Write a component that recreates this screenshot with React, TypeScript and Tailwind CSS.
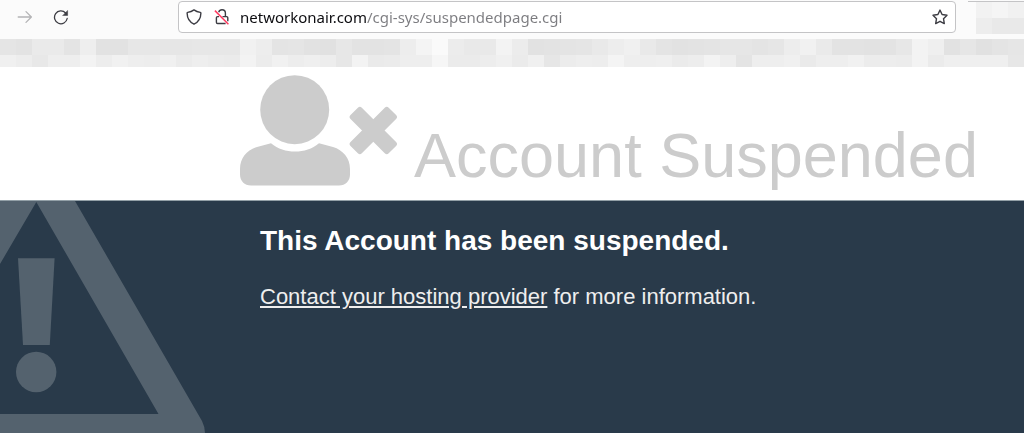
import React, { useState } from "react";

// grey levels of the blurred bookmarks row
const BOOKMARKS_TOP = [
  229, 227, 234, 234, 228, 238, 226, 226, 231, 231, 230, 230, 231, 231, 231, 241,
  237, 228, 229, 226, 225, 231, 227, 227, 228, 237, 244, 250, 236, 233, 233, 243,
  236, 226, 227, 228, 229, 233, 237, 240, 233, 228, 226, 227, 228, 230, 230, 228,
  230, 237, 241, 234, 227, 227, 226, 227, 231, 243, 239, 226, 230, 225, 228, 230,
];
const BOOKMARKS_BOTTOM = [
  240, 237, 232, 238, 238, 243, 237, 241, 238, 237, 240, 235, 238, 236, 235, 243,
  236, 241, 237, 239, 237, 231, 243, 234, 235, 238, 238, 246, 235, 235, 237, 240,
  235, 240, 230, 236, 238, 237, 244, 238, 238, 239, 235, 237, 243, 238, 228, 238,
  238, 240, 234, 238, 238, 241, 236, 237, 236, 243, 235, 239, 239, 239, 239, 231,
];

function BlurRow({ levels, className }: { levels: number[]; className: string }) {
  return (
    <div className={`flex ${className}`}>
      {levels.map((v, i) => (
        <span key={i} className="flex-1" style={{ backgroundColor: `rgb(${v}, ${v}, ${v})` }} />
      ))}
    </div>
  );
}

function ForwardIcon() {
  return (
    <svg viewBox="0 0 16 16" className="size-4" fill="none" stroke="#b4b4b6" strokeWidth="1.3" strokeLinecap="round" strokeLinejoin="round">
      <path d="M1.2 8h13.2M9 2.6 14.4 8 9 13.4" />
    </svg>
  );
}

function ReloadIcon() {
  return (
    <svg viewBox="0 0 16 16" className="size-4" fill="none" stroke="#3c3c43" strokeWidth="1.3" strokeLinecap="round">
      <path d="M14.2 9.500A6.400 6.400 0 1 1 12.600 4" />
      <path d="M14.600 1.800v4.700H10z" fill="#3c3c43" stroke="#3c3c43" strokeWidth=".5" strokeLinejoin="round" />
    </svg>
  );
}

function ShieldIcon() {
  return (
    <svg viewBox="0 0 16 16" className="size-4" fill="none" stroke="#3c3c43" strokeWidth="1.4" strokeLinejoin="round">
      <path d="M8 .9c2 1.5 4.2 2.200 6.300 2.500.400.100.600.300.600.700C14.800 9.400 12.500 13.200 8 15.200 3.500 13.200 1.200 9.400 1.100 4.100c0-.4.200-.6.600-.7C3.800 3.100 6 2.400 8 .9z" />
    </svg>
  );
}

function InsecureIcon() {
  return (
    <svg viewBox="0 0 16 16" className="size-4" fill="none" stroke="#3c3c43" strokeWidth="1.4">
      <path d="M4.700 3.200C5.200 1.700 6.300.8 8 .8c2.100 0 3.400 1.400 3.400 3.400v3.300" />
      <path d="M8.500 7.600h4.100c.7 0 1.200.5 1.200 1.200v3.400M5 7.600H3.600c-.7 0-1.200.5-1.200 1.200v4.500c0 .7.500 1.200 1.200 1.200h8" />
      <path d="M.9 1.600 14.400 15.200" stroke="#ff3b61" strokeWidth="1.500" />
    </svg>
  );
}

function StarIcon() {
  return (
    <svg viewBox="0 0 16 16" className="size-4" fill="none" stroke="#3c3c43" strokeWidth="1.4" strokeLinejoin="round">
      <path d="m8 1.100 2.100 4.400 4.900.7-3.500 3.500.8 4.900L8 12.300l-4.300 2.300.8-4.900L1 6.200l4.900-.7z" />
    </svg>
  );
}

function UserTimesIcon() {
  return (
    <svg viewBox="0 1 158 112" className="h-28 w-[158px] shrink-0" fill="#cccccc" aria-hidden="true">
      <circle cx="54.700" cy="35.700" r="34.500" />
      <path d="M31 69.300C38 75 46 77.600 55 77.600S72 75 79 69.300L93 73C103 76 110 84 110 95V100.500C110 107 105.500 111.500 99 111.500H11C4.500 111.500 0 107 0 100.500V95C0 84 7 76 17 73z" />
      <g transform="translate(133.300 56.500)">
        <rect x="-27" y="-8" width="54" height="16" rx="2.800" transform="rotate(45)" />
        <rect x="-27" y="-8" width="54" height="16" rx="2.800" transform="rotate(-45)" />
      </g>
    </svg>
  );
}

function WarningIcon() {
  return (
    <svg viewBox="0 0 205 232" className="h-[232px] w-[205px] shrink-0" fill="#54626e" aria-hidden="true">
      <path d="M0 0H75L202 220Q205 226 205 232H0V213H158.500L36.300 1 0 63z" />
      <path d="M18 57.300H54.600L49.800 144H23z" />
      <circle cx="36.200" cy="171" r="20.200" />
    </svg>
  );
}

function Toolbar() {
  const [url, setUrl] = useState("networkonair.com/cgi-sys/suspendedpage.cgi");

  return (
    <div className="flex h-[39px] items-start bg-[#fbfbfb] pt-px">
      <nav className="flex h-8 w-[178px] shrink-0 items-center gap-5 pl-[17px]">
        <button type="button" aria-label="Forward" disabled><ForwardIcon /></button>
        <button type="button" aria-label="Reload"><ReloadIcon /></button>
      </nav>
      <div className="flex h-8 flex-1 items-center rounded border border-[#c4c4c6] bg-white px-[7px]">
        <button type="button" aria-label="Tracking protection"><ShieldIcon /></button>
        <button type="button" aria-label="Connection is not secure" className="ml-3"><InsecureIcon /></button>
        <input
          type="text"
          aria-label="Address"
          value={url}
          onChange={(e) => setUrl(e.target.value)}
          className="mx-[10px] min-w-0 flex-1 bg-[linear-gradient(to_right,#0c0c10_127px,#7c7c80_127px)] bg-clip-text font-['Noto_Sans',sans-serif] text-[15px] leading-5 text-transparent outline-none"
        />
        <button type="button" aria-label="Bookmark this page"><StarIcon /></button>
      </div>
      <div className="ml-3 w-14 shrink-0 border-t border-[#c4c4c6]">
        <div className="ml-2 flex h-4">
          <span className="flex-1 bg-[#f2f2f2]" />
          <span className="flex-1 bg-[#f5f5f5]" />
          <span className="flex-1 bg-[#f1f1f1]" />
        </div>
        <div className="ml-2 flex h-4">
          <span className="flex-1 bg-[#ededed]" />
          <span className="flex-1 bg-[#e9e9e9]" />
          <span className="flex-1 bg-[#e9e9e9]" />
        </div>
      </div>
    </div>
  );
}

export default function App() {
  return (
    <div className="bg-white font-['Liberation_Sans',Arial,sans-serif]">
      <Toolbar />
      <BlurRow levels={BOOKMARKS_TOP} className="h-4" />
      <BlurRow levels={BOOKMARKS_BOTTOM} className="h-3" />

      <main>
        <header className="flex items-end gap-4 pt-2 pb-[13px] pl-60 text-[#cccccc]">
          <UserTimesIcon />
          <h1 className="text-[63px] leading-[64px] whitespace-nowrap">Account Suspended</h1>
        </header>

        <section className="flex gap-[55px] overflow-hidden border-t border-[#93a0a7] bg-[#293a4a] text-white">
          <WarningIcon />
          <div className="pt-6">
            <h2 className="text-[28px] leading-8 font-bold">This Account has been suspended.</h2>
            <p className="mt-6 text-[22px] leading-8 text-[#eeeeee]">
              <a href="#contact" className="text-[#eeeeee] underline">Contact your hosting provider</a> for more information.
            </p>
          </div>
        </section>
      </main>
    </div>
  );
}
